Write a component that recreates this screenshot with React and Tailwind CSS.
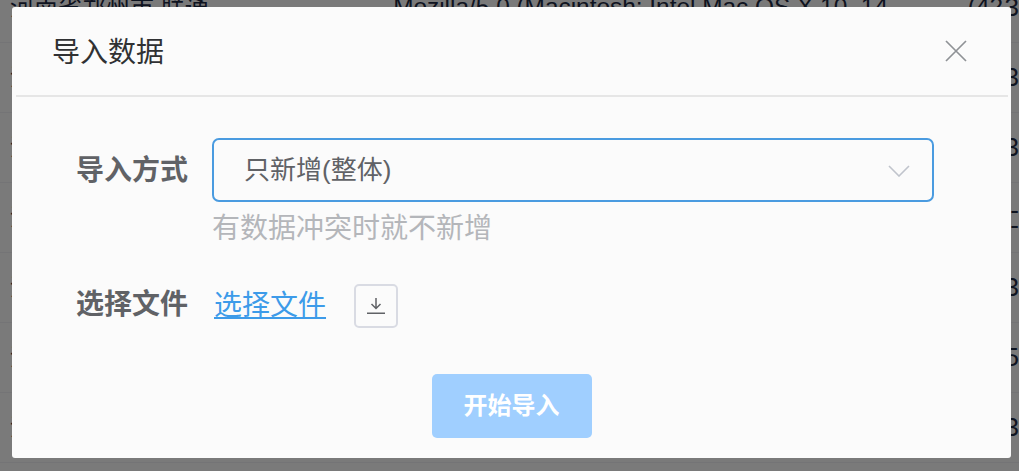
import React from "react";

const city = "河南省郑州市 联通";
const rows = [
    { agent: "Mozilla/5.0 (Macintosh; Intel Mac OS X 10_14", ip: "(42.1", num: "3" },
    { num: "3" },
    { num: "3" },
    { num: "-" },
    { num: "3" },
    { num: "5" },
    { num: "3" },
];

const App = () => {
    return (
        <div className="relative h-[471px] w-[1019px] overflow-hidden bg-white font-['Liberation_Sans','Noto_Sans_CJK_SC',sans-serif]">
            {/* table behind the dialog */}
            <div className="-mt-[27px] text-[#1f2a44]">
                {rows.map((row, i) => (
                    <div key={i} className="flex h-[70px] items-center whitespace-nowrap border-b border-[#f2f3f6]">
                        <div className="w-[396px] pl-[10px] text-[24px]">{city}</div>
                        <div className="w-[579px] overflow-hidden text-[24.4px]">{row.agent}</div>
                        <div className="w-[37px] overflow-hidden text-[24.4px]">{row.ip}</div>
                        {row.num === "-"
                            ? <div className="text-[26px] leading-[15px]"><div>-</div><div>-</div></div>
                            : <div className="text-[26px]">{row.num}</div>}
                    </div>
                ))}
            </div>
            <div className="absolute inset-0 bg-[#000000]/[0.52]"></div>

            <div className="absolute left-[12px] top-[7px] flex h-[451px] w-[999px] flex-col rounded-[3px] bg-[#fbfbfb]">
                <div className="flex h-[88px] items-center justify-between pl-[40px] pr-[44px]">
                    <span className="pt-[4px] text-[28px] leading-none text-[#303133]">导入数据</span>
                    <svg viewBox="0 0 22 22" className="h-[22px] w-[22px] text-[#8f9296]" fill="none" stroke="currentColor" strokeWidth="1.7">
                        <path d="M1 1 L21 21 M21 1 L1 21" />
                    </svg>
                </div>
                <div className="ml-[4px] mr-[3px] h-[2px] bg-[#e6e6e6]"></div>

                <div className="flex flex-1 flex-col pt-[41px]">
                    <div className="flex pl-[64px]">
                        <label className="flex h-[64px] w-[136px] items-center pt-[2px] text-[28px] font-bold text-[#606266]">导入方式</label>
                        <div>
                            <div className="flex h-[64px] w-[722px] items-center justify-between rounded-[7px] border-2 border-[#4a9be0] pl-[30px] pr-[22px] text-[26px] text-[#606266]">
                                <span>只新增(整体)</span>
                                <svg viewBox="0 0 22 12" className="mt-[1px] h-[12px] w-[22px] text-[#c0c4cc]" fill="none" stroke="currentColor" strokeWidth="1.6">
                                    <path d="M1 1 L11 11 L21 1" />
                                </svg>
                            </div>
                            <p className="mt-[9px] text-[28px] leading-[36px] text-[#b4b6ba]">有数据冲突时就不新增</p>
                        </div>
                    </div>

                    <div className="mt-[37px] flex h-[44px] items-center pl-[64px]">
                        <label className="w-[138px] pb-[2px] text-[28px] font-bold text-[#606266]">选择文件</label>
                        <a href="#" className="text-[28px] text-[#3d9be9] underline">选择文件</a>
                        <button className="ml-[28px] flex h-[44px] w-[44px] items-center justify-center rounded-[5px] border-2 border-[#d9dbe3] text-[#606266]">
                            <svg viewBox="0 0 18 16" className="h-[16px] w-[18px]" fill="none" stroke="currentColor" strokeWidth="1.5">
                                <path d="M9 0 L9 10 M4.5 6 L9 10.5 L13.5 6 M0 15.2 L18 15.2" />
                            </svg>
                        </button>
                    </div>

                    <div className="mt-[46px] flex justify-center">
                        <button className="h-[64px] w-[160px] rounded-[5px] bg-[#a0cfff] text-[24px] font-bold text-white">开始导入</button>
                    </div>
                </div>
            </div>
        </div>
    );
};

export default App;
